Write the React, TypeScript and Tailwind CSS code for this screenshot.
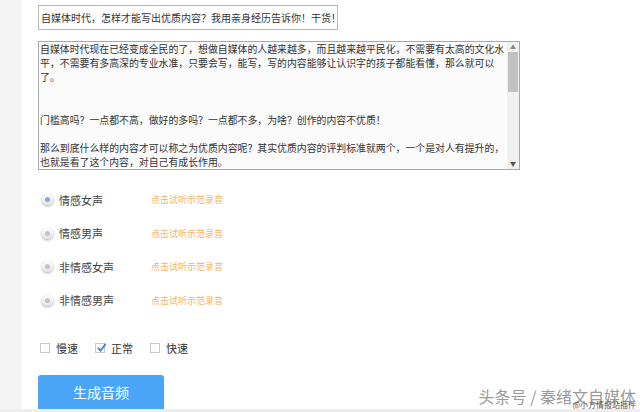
import React from 'react';

const font = { fontFamily: '"Noto Sans CJK SC", "Noto Sans", sans-serif' };

const bodyLines = [
  '自媒体时代现在已经变成全民的了，想做自媒体的人越来越多，而且越来越平民化，不需要有太高的文化水',
  '平，不需要有多高深的专业水准，只要会写，能写，写的内容能够让认识字的孩子都能看懂，那么就可以',
  '了。',
  '',
  '',
  '门槛高吗？一点都不高，做好的多吗？一点都不多，为啥？创作的内容不优质！',
  '',
  '那么到底什么样的内容才可以称之为优质内容呢？其实优质内容的评判标准就两个，一个是对人有提升的，',
  '也就是看了这个内容，对自己有成长作用。',
];

const voices = ['情感女声', '情感男声', '非情感女声', '非情感男声'];

const Radio = ({ checked }: { checked: boolean }) => (
  <span className="w-[11px] h-[11px] rounded-full bg-gradient-to-b from-white to-[#e2e2e2] shadow-[0_1px_3px_rgba(0,0,0,0.35)] flex items-center justify-center">
    <span className={`w-[5px] h-[5px] rounded-full ${checked ? 'bg-[#86a9e6]' : 'bg-[#c4c4c4]'}`} />
  </span>
);

const Check = ({ checked }: { checked: boolean }) => (
  <span className="block w-[10px] h-[10px] border border-[#c8c8c8] bg-white relative">
    {checked && (
      <svg viewBox="0 0 12 12" className="absolute -top-[2px] left-0 w-[11px] h-[11px]">
        <path d="M2 6.5 L5 9.5 L10.5 2" fill="none" stroke="#3b82d8" strokeWidth="2" />
      </svg>
    )}
  </span>
);

export default function App() {
  return (
    <div className="w-[640px] h-[412px] overflow-hidden flex bg-white relative" style={font}>
      <div className="w-[22px] bg-[#f4f4f4]" />
      <div className="flex-1 pl-[16px] pt-[5px] flex flex-col">
        <div className="w-[300px] h-[27px] border border-[#b5b5b5] bg-white flex items-center px-[2px] text-[10px] text-[#333] whitespace-nowrap">
          自媒体时代，怎样才能写出优质内容？我用亲身经历告诉你！干货！
        </div>

        <div className="mt-[11px] w-[482px] h-[130px] border border-[#a9a9a9] bg-[#fbfbfb] flex">
          <div className="flex-1 pl-[1px] text-[9.9px] leading-[14.2px] text-[#333] overflow-hidden">
            {bodyLines.map((l, i) => (
              <div key={i} className="whitespace-nowrap h-[14.2px]">{l}</div>
            ))}
          </div>
          <div className="w-[12px] bg-[#f1f1f1] flex flex-col items-center">
            <span className="text-[6px] leading-[10px] text-[#888]">▲</span>
            <div className="w-[10px] h-[40px] bg-[#c1c1c1]" />
            <div className="flex-1" />
            <span className="text-[6px] leading-[10px] text-[#555]">▼</span>
          </div>
        </div>

        <div className="mt-[24px] flex flex-col gap-[22.5px] pl-[4px]">
          {voices.map((v, i) => (
            <div key={v} className="flex items-center h-[11px]">
              <Radio checked={i === 0} />
              <span className="ml-[6px] w-[92px] text-[11px] text-[#444]">{v}</span>
              <span className="text-[9px] text-[#f5b36a]">点击试听示范录音</span>
            </div>
          ))}
        </div>

        <div className="mt-[34px] flex items-center text-[11px] text-[#333] pl-[2px]">
          <Check checked={false} />
          <span className="ml-[6px]">慢速</span>
          <span className="ml-[17px]"><Check checked={true} /></span>
          <span className="ml-[6px]">正常</span>
          <span className="ml-[17px]"><Check checked={false} /></span>
          <span className="ml-[6px]">快速</span>
        </div>

        <div className="mt-[19px] w-[126px] h-[40px] rounded-[3px] bg-[#4aa5f6] text-white text-[14px] flex items-center justify-center pb-[2px]">
          生成音频
        </div>
      </div>

      <div className="absolute right-[4px] bottom-[4px] text-[16px] text-[#9a9a9a] whitespace-nowrap">
        头条号 / 秦绪文自媒体
      </div>
      <div className="absolute right-[4px] bottom-[1px] text-[8px] text-[#555] whitespace-nowrap">
        @小方情报站插件
      </div>
      <div className="absolute left-0 right-0 bottom-0 h-[3px] bg-[#eeeeee]" />
    </div>
  );
}
